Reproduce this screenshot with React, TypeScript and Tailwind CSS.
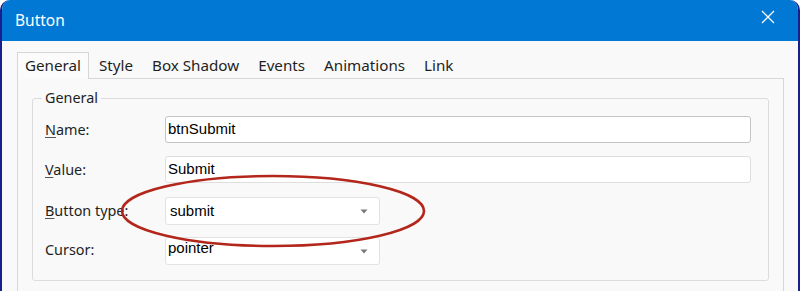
import { useState } from 'react';

const TABS = ['General', 'Style', 'Box Shadow', 'Events', 'Animations', 'Link'];

const uiFont = { fontFamily: '"Segoe UI", "Noto Sans", "Open Sans", sans-serif' };
const inputFont = { fontFamily: '"Liberation Sans", Arial, sans-serif' };

function Caret() {
  return (
    <svg width="8" height="5" viewBox="0 0 8 5" className="shrink-0">
      <path d="M0.5 0.5h7L4 4.5z" fill="#7a7a7a" />
    </svg>
  );
}

function FieldLabel({ access, rest }: { access?: string; rest: string }) {
  return (
    <span className="w-[120px] shrink-0 text-[14.4px] text-[#1f1f1f]">
      {access ? <span className="underline underline-offset-2 decoration-[#555]">{access}</span> : null}
      {rest}
    </span>
  );
}

export default function App() {
  const [tab, setTab] = useState('General');
  const [name, setName] = useState('btnSubmit');
  const [value, setValue] = useState('Submit');

  return (
    <div className="relative w-[800px] h-[291px] overflow-hidden bg-white" style={uiFont}>
      <div className="flex flex-col h-[300px] rounded-t-[10px] overflow-hidden border-x-2 border-[#1a1f8f] bg-[#f9f9f9]">
        {/* title bar */}
        <div className="h-[41px] shrink-0 bg-[#0078d4] flex items-center justify-between pl-[13px] pr-[25px] -mx-[2px]">
          <span className="pl-[2px] text-[15.5px] text-white">Button</span>
          <svg width="14" height="14" viewBox="0 0 14 14" className="mt-[-7px]">
            <path d="M1 1l12 12M13 1L1 13" stroke="white" strokeWidth="1.3" />
          </svg>
        </div>

        <div className="flex-1 pt-[11px] pl-[15px] pr-[14px]">
          {/* tabs */}
          <div className="flex h-[27px] items-stretch">
            {TABS.map((t) => (
              <button
                key={t}
                onClick={() => setTab(t)}
                className={`text-[15.2px] leading-none text-[#1f1f1f] ${
                  t === tab
                    ? 'relative z-10 px-[7px] mr-[10px] border border-b-0 border-[#d6d6d6] bg-[#fbfbfb] h-[27px]'
                    : 'px-0 mr-[19px]'
                }`}
              >
                {t}
              </button>
            ))}
          </div>

          {/* tab panel */}
          <div className="-mt-[1px] h-[300px] border border-[#d6d6d6] pt-[9px] pl-[14px] pr-[14px]">
            <fieldset className="h-[193px] rounded-[3px] border border-[#dcdcdc] pl-[9px] pr-[17px]">
              <legend className="px-[3px] text-[14.4px] text-[#1f1f1f] leading-[20px]">General</legend>
              <div className="pl-[3px] pt-[8px] flex flex-col gap-[13px]">
                <label className="flex items-center h-[27px]">
                  <FieldLabel access="N" rest="ame:" />
                  <input
                    value={name}
                    onChange={(e) => setName(e.target.value)}
                    className="flex-1 h-[27px] rounded-[3px] border border-[#c4c4c4] bg-white px-[2px] pb-[2px] text-[15px] text-black outline-none"
                    style={inputFont}
                  />
                </label>
                <label className="flex items-center h-[27px]">
                  <FieldLabel access="V" rest="alue:" />
                  <input
                    value={value}
                    onChange={(e) => setValue(e.target.value)}
                    className="flex-1 h-[27px] rounded-[3px] border border-[#dedede] bg-white px-[2px] pb-[2px] text-[15px] text-black outline-none"
                    style={inputFont}
                  />
                </label>
                <div className="flex items-center h-[28px] mt-[1px]">
                  <FieldLabel access="B" rest="utton type:" />
                  <div
                    className="w-[215px] h-[28px] rounded-[3px] border border-[#e2e2e2] bg-white flex items-center justify-between pl-[4px] pr-[11px]"
                    style={inputFont}
                  >
                    <span className="text-[15px] text-black">submit</span>
                    <Caret />
                  </div>
                </div>
                <div className="flex items-center h-[28px] -mt-[1px]">
                  <span className="w-[120px] shrink-0 text-[14.4px] text-[#1f1f1f] -mt-[3px]">Cursor:</span>
                  <div
                    className="w-[215px] h-[28px] rounded-[3px] border border-[#e2e2e2] bg-white flex items-center justify-between pl-[2px] pr-[11px]"
                    style={inputFont}
                  >
                    <span className="text-[15px] text-black -mt-[6px]">pointer</span>
                    <Caret />
                  </div>
                </div>
              </div>
            </fieldset>
          </div>
        </div>
      </div>

      {/* red annotation ellipse */}
      <svg className="absolute left-0 top-0 pointer-events-none" width="800" height="291">
        <ellipse cx="273" cy="211" rx="151" ry="35" fill="none" stroke="#b3261b" strokeWidth="2.6" />
      </svg>
    </div>
  );
}
